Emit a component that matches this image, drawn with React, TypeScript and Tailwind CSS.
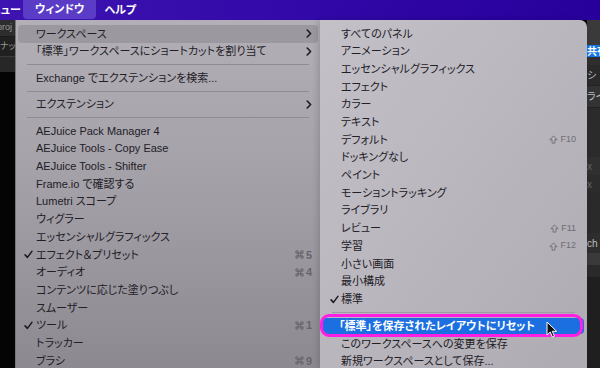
import React from 'react';

type Row = { label: string; check?: boolean; sub?: boolean; keys?: string; hover?: boolean } | 'sep';

const leftRows: Row[] = [
  { label: 'ワークスペース', sub: true, hover: true },
  { label: '「標準」ワークスペースにショートカットを割り当て', sub: true },
  'sep',
  { label: 'Exchange でエクステンションを検索...' },
  'sep',
  { label: 'エクステンション', sub: true },
  'sep',
  { label: 'AEJuice Pack Manager 4' },
  { label: 'AEJuice Tools - Copy Ease' },
  { label: 'AEJuice Tools - Shifter' },
  { label: 'Frame.io で確認する' },
  { label: 'Lumetri スコープ' },
  { label: 'ウィグラー' },
  { label: 'エッセンシャルグラフィックス' },
  { label: 'エフェクト＆プリセット', check: true, keys: '5' },
  { label: 'オーディオ', keys: '4' },
  { label: 'コンテンツに応じた塗りつぶし' },
  { label: 'スムーザー' },
  { label: 'ツール', check: true, keys: '1' },
  { label: 'トラッカー' },
  { label: 'ブラシ', keys: '9' },
];

const subRows: Row[] = [
  { label: 'すべてのパネル' },
  { label: 'アニメーション' },
  { label: 'エッセンシャルグラフィックス' },
  { label: 'エフェクト' },
  { label: 'カラー' },
  { label: 'テキスト' },
  { label: 'デフォルト', keys: 'F10' },
  { label: 'ドッキングなし' },
  { label: 'ペイント' },
  { label: 'モーショントラッキング' },
  { label: 'ライブラリ' },
  { label: 'レビュー', keys: 'F11' },
  { label: '学習', keys: 'F12' },
  { label: '小さい画面' },
  { label: '最小構成' },
  { label: '標準', check: true },
];

const Check = () => (
  <svg width="9" height="9" viewBox="0 0 10 10" className="shrink-0">
    <path d="M1.2 5.4 L3.8 8.2 L8.8 1.5" fill="none" stroke="#1d1b20" strokeWidth="1.7" strokeLinecap="round" strokeLinejoin="round" />
  </svg>
);

const Chevron = () => (
  <svg width="6" height="9" viewBox="0 0 6 9">
    <path d="M1.2 1 L4.6 4.5 L1.2 8" fill="none" stroke="#1d1b20" strokeWidth="1.6" strokeLinecap="round" strokeLinejoin="round" />
  </svg>
);

// ⌘ キー記号
const CmdKey = () => (
  <svg width="9" height="9" viewBox="0 0 10 10" className="mr-[2px]">
    <path
      d="M3.5 3.5 H6.5 V6.5 H3.5 Z M3.5 3.5 V2.2 A1.3 1.3 0 1 0 2.2 3.5 H3.5 M6.5 3.5 V2.2 A1.3 1.3 0 1 1 7.8 3.5 H6.5 M3.5 6.5 V7.8 A1.3 1.3 0 1 1 2.2 6.5 H3.5 M6.5 6.5 V7.8 A1.3 1.3 0 1 0 7.8 6.5 H6.5"
      fill="none"
      stroke="#67646c"
      strokeWidth="1.2"
    />
  </svg>
);

const ShiftKey = () => (
  <svg width="9" height="9" viewBox="0 0 10 10" className="mr-[2px]">
    <path d="M5 1 L9 5.2 H6.6 V9 H3.4 V5.2 H1 Z" fill="none" stroke="#6f6c74" strokeWidth="1" strokeLinejoin="round" />
  </svg>
);

const Cursor = () => (
  <svg width="12" height="17" viewBox="0 0 12 17" className="absolute left-[546px] top-[321px]">
    <path d="M1 1 V14 L4.2 11 L6.4 16 L8.4 15.1 L6.3 10.3 H10.6 Z" fill="#111" stroke="#fff" strokeWidth="1" strokeLinejoin="round" />
  </svg>
);

export default function App() {
  return (
    <div className="relative w-[600px] h-[368px] overflow-hidden bg-black text-[11px] [font-family:'Liberation_Sans','Noto_Sans_CJK_JP',sans-serif] [font-feature-settings:'palt'] text-[#222025]">
      {/* メニューバー */}
      <div className="h-[20px] flex items-center overflow-hidden bg-gradient-to-r from-[#3d13b1] via-[#3208a8] to-[#27009b] text-white font-semibold">
        <span className="w-[23px] shrink-0 whitespace-nowrap -indent-[10px]">ニュー</span>
        <span className="h-[19px] self-start flex items-center px-[12px] rounded-b-[4px] bg-[#5a3cc6]">ウィンドウ</span>
        <span className="pl-[8px]">ヘルプ</span>
      </div>

      <div className="flex h-[348px]">
        {/* 左のアプリ背景 */}
        <div className="w-[15px] shrink-0 flex flex-col text-[9px] text-[#9a9a9a] overflow-hidden whitespace-nowrap">
          <div className="h-[17px] bg-[#2d2d2d] flex items-center border-b border-[#1a1a1a] -indent-[3px]">proj</div>
          <div className="h-[19px] bg-[#202020] flex items-center">ナッ</div>
          <div className="h-[16px] bg-[#272727] border-t border-[#3a3a3a]" />
          <div className="flex-1 bg-[#040404]" />
        </div>

        {/* ウィンドウメニュー */}
        <div className="w-[305px] shrink-0 pt-[5px] bg-gradient-to-b from-[#b2afb7] via-[#a29fa7] to-[#8c8991] border-l border-[#77747c]">
          {leftRows.map((r, i) =>
            r === 'sep' ? (
              <div key={i} className="h-[8.8px] flex items-center px-[11px]">
                <div className="h-px w-full bg-[#8e8b93]" />
              </div>
            ) : (
              <div
                key={i}
                className={`h-[17.7px] mx-[2px] flex items-center rounded-[4px] pl-[6px] pr-[6px] ${r.hover ? 'bg-[#9b98a0]' : ''}`}
              >
                <span className="w-[11px] flex justify-start">{r.check && <Check />}</span>
                <span className="flex-1 whitespace-nowrap pl-[1px]">{r.label}</span>
                {r.sub && <Chevron />}
                {r.keys && (
                  <span className="flex items-center text-[#67646c] font-semibold">
                    <CmdKey />
                    {r.keys}
                  </span>
                )}
              </div>
            )
          )}
        </div>

        {/* ワークスペース サブメニュー */}
        <div className="relative w-[267px] shrink-0 pt-[5px] rounded-tr-[7px] bg-gradient-to-br from-[#c3c0c8] via-[#b9b6be] to-[#aeabb3] shadow-[-2px_0_6px_rgba(0,0,0,0.15)]">
          {subRows.map((r, i) =>
            r === 'sep' ? null : (
              <div key={i} className="h-[17.7px] mx-[2px] flex items-center pl-[8px] pr-[9px]">
                <span className="w-[11px]">{r.check && <Check />}</span>
                <span className="flex-1 whitespace-nowrap">{r.label}</span>
                {r.keys && (
                  <span className="flex items-center text-[9px] text-[#6f6c74]">
                    <ShiftKey />
                    {r.keys}
                  </span>
                )}
              </div>
            )
          )}
          <div className="h-[9px] flex items-center px-[12px]">
            <div className="h-px w-full bg-[#9e9ba3]" />
          </div>
          <div className="h-[18px] py-[1px] pl-[2px] pr-[3px]">
            <div className="relative h-[16px] rounded-[4px] bg-[#1b6fe0] text-white font-bold flex items-center pl-[17px]">
              「標準」を保存されたレイアウトにリセット
              <span className="absolute -left-[2px] right-[1px] -top-[4px] -bottom-[3px] rounded-[9px] border-[3px] border-[#ff1ee3]" />
            </div>
          </div>
          <div className="h-[17.7px] mx-[2px] flex items-center pl-[19px]">このワークスペースへの変更を保存</div>
          <div className="h-[17.7px] mx-[2px] flex items-center pl-[19px]">新規ワークスペースとして保存...</div>
        </div>

        {/* 右のアプリ背景 */}
        <div className="flex-1 flex flex-col text-[10px] text-[#bdbdbd] overflow-hidden whitespace-nowrap">
          <div className="h-[25px] bg-[#3a3a3a]" />
          <div className="h-[12px] bg-[#1473e6] text-white font-bold flex items-center">共有</div>
          <div className="h-[8px] bg-[#2f2f2f]" />
          <div className="h-[20px] bg-[#2a2a2a] flex items-center">シ</div>
          <div className="h-[22px] bg-[#333] flex items-center border-t border-[#222]">ライ</div>
          <div className="h-[50px] bg-[#2b2b2b] border-t border-[#222]" />
          <div className="h-[18px] bg-[#303030] text-[#666] flex items-center">x</div>
          <div className="h-[18px] bg-[#2c2c2c] text-[#666] flex items-center">x</div>
          <div className="h-[40px] bg-[#2a2a2a]" />
          <div className="h-[20px] bg-[#2e2e2e] flex items-center">ch</div>
          <div className="h-[12px] bg-[#3a3a3a]" />
          <div className="h-[12px] bg-[#2a2a2a]" />
          <div className="flex-1 bg-[#1f1f1f]" />
        </div>
      </div>

      <Cursor />
    </div>
  );
}
